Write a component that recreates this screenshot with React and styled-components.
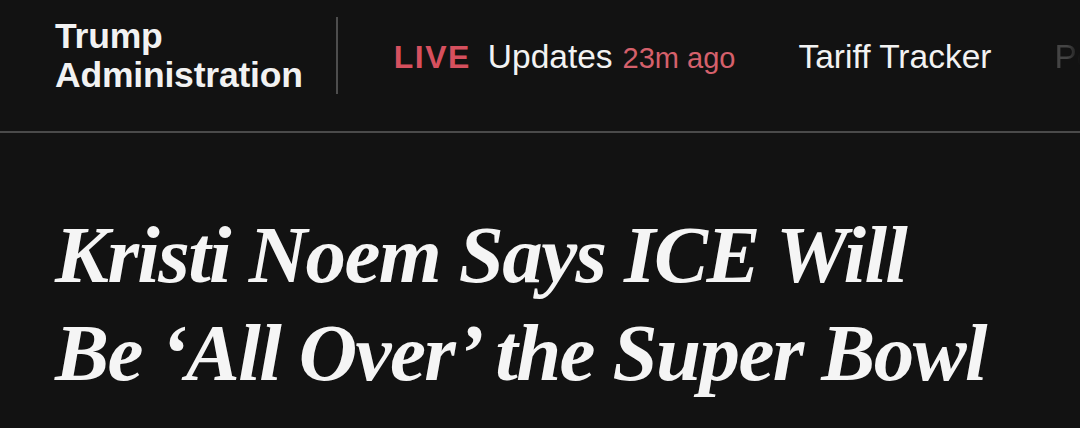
import React from "react";
import styled, { createGlobalStyle, css } from "styled-components";

const Global = createGlobalStyle`
  html, body { margin: 0; padding: 0; background: #121212; }
  body { width: 1080px; height: 428px; overflow: hidden; }
`;

const Page = styled.div`
  width: 1080px;
  height: 428px;
  background: #121212;
  overflow: hidden;
`;

const NavBar = styled.nav`
  display: flex;
  align-items: center;
  height: 133px;
  box-sizing: border-box;
  padding: 0 0 20px 55px;
  border-bottom: 2px solid #4a4a4a;
  white-space: nowrap;
  overflow: hidden;
`;

const Section = styled.a`
  display: block;
  font-family: "Liberation Sans", Arial, sans-serif;
  font-weight: 700;
  font-size: 35.5px;
  line-height: 39px;
  color: #f2f2f2;
  letter-spacing: -0.2px;
  padding-right: 33px;
`;

const Divider = styled.span`
  width: 2px;
  height: 77px;
  background: #4d4d4d;
  flex: none;
`;

const Links = styled.ul`
  display: flex;
  align-items: baseline;
  gap: 63px;
  list-style: none;
  margin: 3px 0 0 56px;
  padding: 0;
`;

const Item = styled.li`
  font-family: "Liberation Sans", Arial, sans-serif;
  font-size: 33.5px;
  color: #f2f2f2;
  display: flex;
  align-items: baseline;
  gap: 10px;
  ${(p) =>
    p.$faded &&
    css`
      color: #444;
      -webkit-mask-image: linear-gradient(to right, #000 0, #000 14px, transparent 26px);
      mask-image: linear-gradient(to right, #000 0, #000 14px, transparent 26px);
    `}
`;

const Live = styled.span`
  font-weight: 700;
  color: #d6505e;
  letter-spacing: 1.5px;
  font-size: 32px;
  margin-right: 7px;
`;

const Ago = styled.span`
  color: #d5606b;
  font-size: 29px;
`;

const Headline = styled.h1`
  margin: 0;
  padding: 73px 0 0 55px;
  font-family: "Liberation Serif", "Times New Roman", serif;
  font-style: italic;
  font-weight: 700;
  font-size: 81px;
  line-height: 98px;
  color: #f5f5f5;
  letter-spacing: -1.6px;
`;

export default function App() {
  return (
    <Page>
      <Global />
      <NavBar>
        <Section>
          Trump
          <br />
          Administration
        </Section>
        <Divider />
        <Links>
          <Item>
            <Live>LIVE</Live>
            <span>Updates</span>
            <Ago>23m ago</Ago>
          </Item>
          <Item>Tariff Tracker</Item>
          <Item $faded>Politics</Item>
        </Links>
      </NavBar>
      <Headline>
        Kristi Noem Says ICE Will
        <br />
        Be ‘All Over’ the Super Bowl
      </Headline>
    </Page>
  );
}
